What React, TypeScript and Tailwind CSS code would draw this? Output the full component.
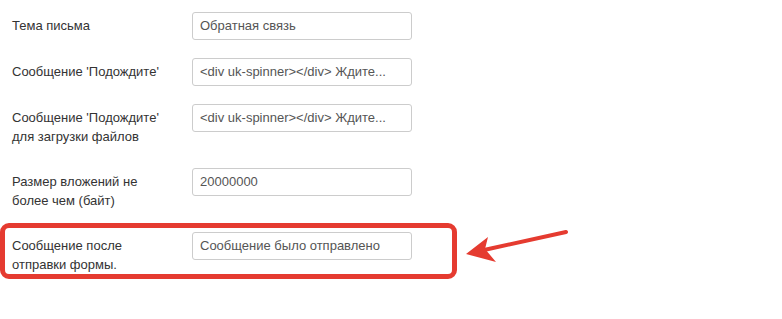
const ROWS = [
  { label: "Тема письма", value: "Обратная связь", h: "h-[46px]" },
  { label: "Сообщение 'Подождите'", value: "<div uk-spinner></div> Ждите...", h: "h-[46px]" },
  { label: "Сообщение 'Подождите' для загрузки файлов", value: "<div uk-spinner></div> Ждите...", h: "h-[64px]" },
  { label: "Размер вложений не более чем (байт)", value: "20000000", h: "h-[64px]" },
  { label: "Сообщение после отправки формы.", value: "Сообщение было отправлено", h: "h-[64px]" },
];

function Row({ label, value, h }: { label: string; value: string; h: string }) {
  return (
    <div className={`flex ${h}`}>
      <label className="w-[160px] pt-[4px] text-[13px] leading-[19px] text-[#333]">{label}</label>
      <div className="ml-[20px]">
        <div className="w-[220px] h-[28px] px-[7px] flex items-center rounded-[3px] border border-[#cccccc] bg-white text-[13px] text-[#555] overflow-hidden whitespace-nowrap">
          {value}
        </div>
      </div>
    </div>
  );
}

export default function App() {
  return (
    <div className="relative w-[782px] h-[319px] bg-white overflow-hidden" style={{ fontFamily: '"Liberation Sans", Arial, sans-serif' }}>
      <div className="pt-[12px] pl-[12px] flex flex-col">
        {ROWS.map((r, i) => (
          <Row key={i} {...r} />
        ))}
      </div>
      {/* annotation */}
      <div className="absolute left-0 top-[223px] w-[457px] h-[56px] border-[5px] border-[#e53b30] rounded-[9px]" />
      <svg className="absolute left-0 top-0" width="782" height="319">
        <line x1="566" y1="232" x2="484" y2="250" stroke="#e53b30" strokeWidth="4" strokeLinecap="round" />
        <polygon points="466,254 488,237 485,249 496,262" fill="#e53b30" />
      </svg>
    </div>
  );
}
